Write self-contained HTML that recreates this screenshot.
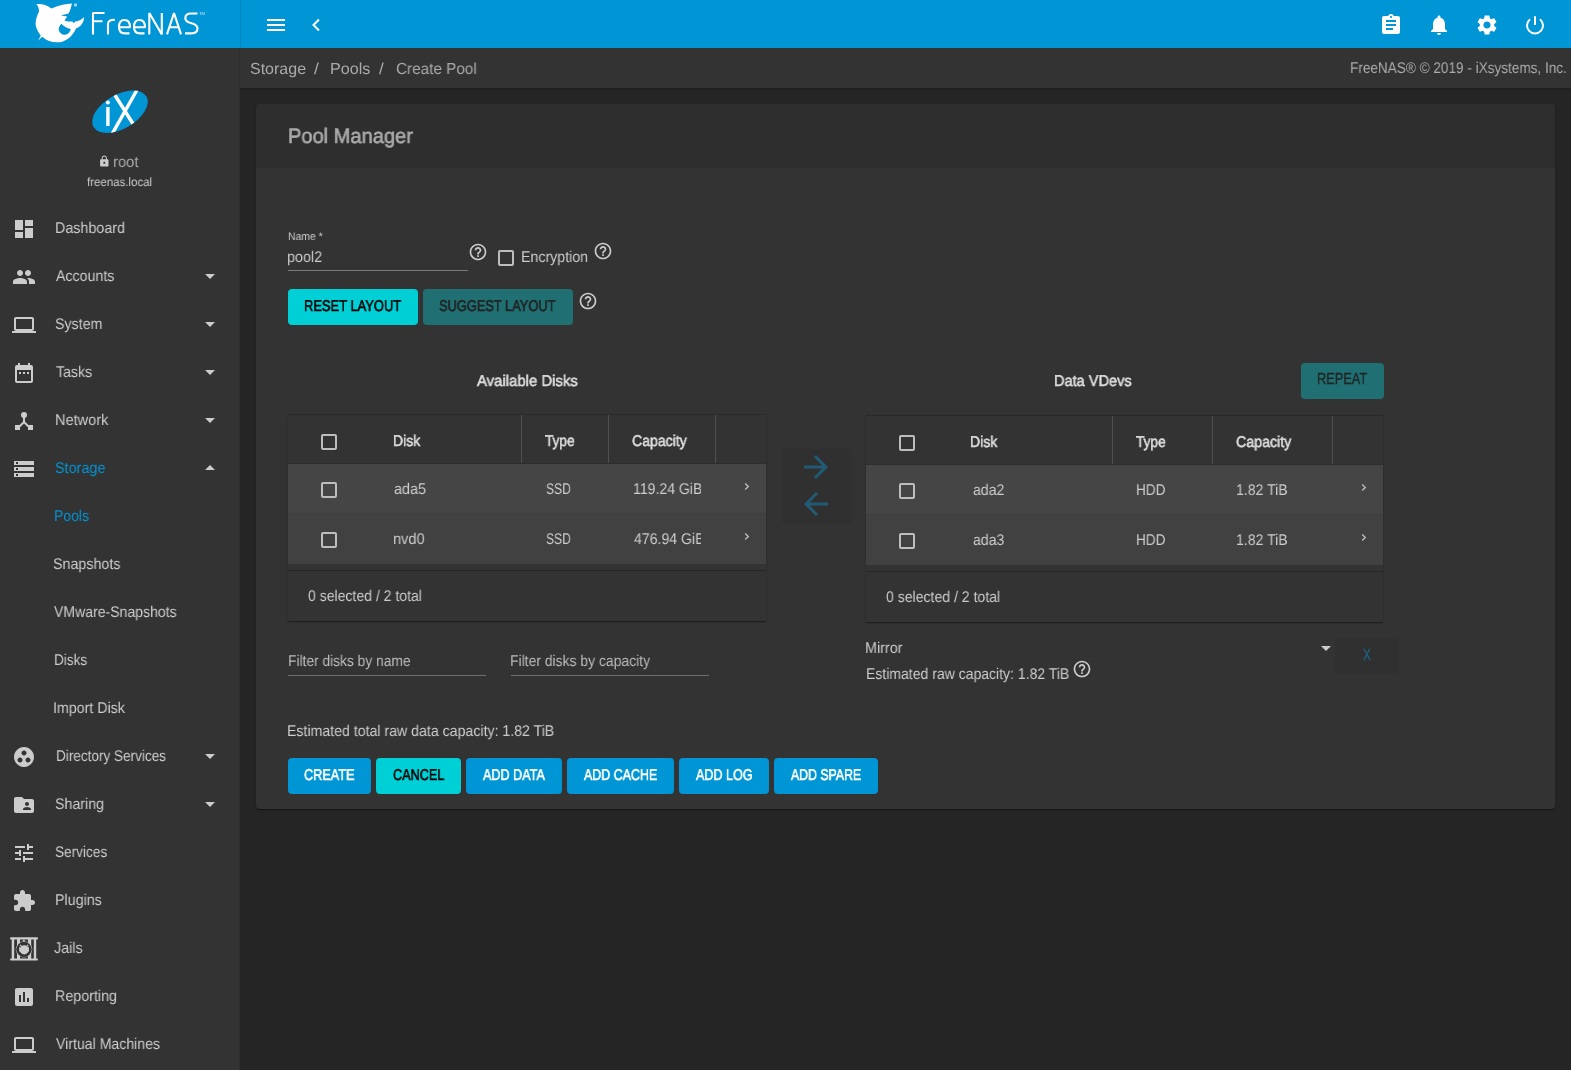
<!DOCTYPE html>
<html><head><meta charset="utf-8">
<style>
*{box-sizing:border-box;margin:0;padding:0}
html,body{width:1571px;height:1070px;overflow:hidden;background:#252525;font-family:"Liberation Sans",sans-serif;color:#ccc}
.abs{position:absolute}
#topbar{position:absolute;left:0;top:0;width:1571px;height:48px;background:#0095d5}
#topdiv{position:absolute;left:240px;top:0;width:1px;height:48px;background:#0887bf}
#sidebar{position:absolute;left:0;top:48px;width:240px;height:1022px;background:#333}
#sidebar .sep{position:absolute;left:239px;top:0;width:1px;height:1022px;background:#2c2c2c}
#crumb{position:absolute;left:240px;top:48px;width:1331px;height:40px;background:#333}
.t{position:absolute;white-space:nowrap;line-height:1;will-change:transform}
.nav{position:absolute;left:0;width:240px;height:48px}
.nav svg{position:absolute;left:12px;top:13px;width:24px;height:24px;fill:#ccc}
.nav .lbl{position:absolute;left:56px;top:17px;font-size:14px;color:#ccc;line-height:14px;white-space:nowrap;will-change:transform}
.nav .car{position:absolute;left:205px;top:22px;width:0;height:0;border-left:5px solid transparent;border-right:5px solid transparent;border-top:5px solid #ccc}
.nav .car.up{border-top:0;border-bottom:5px solid #ccc;top:21px}
.sub .lbl{left:54px}
#card{position:absolute;left:256px;top:104px;width:1299px;height:705px;background:#333;border-radius:4px;box-shadow:0 2px 1px -1px rgba(0,0,0,.2),0 1px 1px 0 rgba(0,0,0,.14),0 1px 3px 0 rgba(0,0,0,.12)}
#cardhead{position:absolute;left:0;top:0;width:1299px;height:64px;background:#2e2e2e;border-radius:4px 4px 0 0}
.btn{position:absolute;border-radius:4px;height:36px}
.help{position:absolute;width:20px;height:20px;fill:#ccc}
.cb{position:absolute;width:16px;height:16px;border:2px solid #bdbdbd;border-radius:2px}






.th{position:absolute;font-size:14px;font-weight:bold;color:#ddd;line-height:14px;white-space:nowrap}
.td{position:absolute;font-size:14px;color:#ccc;line-height:14px;white-space:nowrap}
.chev{position:absolute;font-size:12px;color:#ccc}

.tbl{position:absolute;background:#333;box-shadow:0 2px 1px -1px rgba(0,0,0,.2),0 1px 1px 0 rgba(0,0,0,.14),0 1px 3px 0 rgba(0,0,0,.12)}
.tbl .hd{position:absolute;left:0;top:0;width:100%;height:48px;background:#333}
.tbl .hb{position:absolute;left:0;top:48px;width:100%;height:1px;background:#2e2e2e}
.tbl .r1{position:absolute;left:0;top:49px;width:100%;height:50px;background:#454545;border-bottom:1px solid #3f3f3f}
.tbl .r2{position:absolute;left:0;top:99px;width:100%;height:50px;background:#414141}
.tbl .strip{position:absolute;left:0;top:149px;width:100%;height:7px;background:#333;border-bottom:1px solid #262626}
.tbl .vs{position:absolute;top:0;width:1px;height:48px;background:#505050}
</style></head><body>

<div id="topbar"></div>
<div id="topdiv"></div>
<div id="sidebar"><div class="sep"></div></div>
<div class="nav" style="top:204px"><svg viewBox="0 0 24 24"><path d="M3 13h8V3H3v10zm0 8h8v-6H3v6zm10 0h8V11h-8v10zm0-18v6h8V3h-8z"/></svg></div>
<div class="nav" style="top:252px"><svg viewBox="0 0 24 24"><path d="M16 11c1.66 0 2.99-1.34 2.99-3S17.66 5 16 5c-1.66 0-3 1.34-3 3s1.34 3 3 3zm-8 0c1.66 0 2.99-1.34 2.99-3S9.66 5 8 5C6.34 5 5 6.34 5 8s1.34 3 3 3zm0 2c-2.33 0-7 1.17-7 3.5V19h14v-2.5c0-2.33-4.67-3.5-7-3.5zm8 0c-.29 0-.62.02-.97.05 1.16.84 1.97 1.97 1.97 3.45V19h6v-2.5c0-2.33-4.67-3.5-7-3.5z"/></svg><div class="car"></div></div>
<div class="nav" style="top:300px"><svg viewBox="0 0 24 24"><path d="M20 18c1.1 0 1.99-.9 1.99-2L22 6c0-1.1-.9-2-2-2H4c-1.1 0-2 .9-2 2v10c0 1.1.9 2 2 2H0v2h24v-2h-4zM4 6h16v10H4V6z"/></svg><div class="car"></div></div>
<div class="nav" style="top:348px"><svg viewBox="0 0 24 24"><path d="M9 11H7v2h2v-2zm4 0h-2v2h2v-2zm4 0h-2v2h2v-2zm2-7h-1V2h-2v2H8V2H6v2H5c-1.11 0-1.99.9-1.99 2L3 20c0 1.1.89 2 2 2h14c1.1 0 2-.9 2-2V6c0-1.1-.9-2-2-2zm0 16H5V9h14v11z"/></svg><div class="car"></div></div>
<div class="nav" style="top:396px"><svg viewBox="0 0 24 24"><circle cx="12" cy="6" r="3"/><path d="M11 8h2v4.6l4.3 4.3-1.4 1.4L12 14.4l-3.9 3.9-1.4-1.4 4.3-4.3z"/><rect x="3" y="16" width="5" height="5"/><rect x="16" y="16" width="5" height="5"/></svg><div class="car"></div></div>
<div class="nav" style="top:444px"><svg viewBox="0 0 24 24"><path d="M2 20h20v-4H2v4zm2-3h2v2H4v-2zM2 4v4h20V4H2zm4 3H4V5h2v2zm-4 7h20v-4H2v4zm2-3h2v2H4v-2z"/></svg><div class="car up"></div></div>
<div class="nav sub" style="top:492px"></div>
<div class="nav sub" style="top:540px"></div>
<div class="nav sub" style="top:588px"></div>
<div class="nav sub" style="top:636px"></div>
<div class="nav sub" style="top:684px"></div>
<div class="nav" style="top:732px"><svg viewBox="0 0 24 24"><path d="M12 2C6.48 2 2 6.48 2 12s4.48 10 10 10 10-4.48 10-10S17.52 2 12 2zM8 17.5c-1.38 0-2.5-1.12-2.5-2.5s1.12-2.5 2.5-2.5 2.5 1.12 2.5 2.5-1.12 2.5-2.5 2.5zM9.5 8c0-1.38 1.12-2.5 2.5-2.5s2.5 1.12 2.5 2.5-1.12 2.5-2.5 2.5S9.5 9.38 9.5 8zm6.5 9.5c-1.38 0-2.5-1.12-2.5-2.5s1.12-2.5 2.5-2.5 2.5 1.12 2.5 2.5-1.12 2.5-2.5 2.5z"/></svg><div class="car"></div></div>
<div class="nav" style="top:780px"><svg viewBox="0 0 24 24"><path d="M20 6h-8l-2-2H4c-1.1 0-1.99.9-1.99 2L2 18c0 1.1.9 2 2 2h16c1.1 0 2-.9 2-2V8c0-1.1-.9-2-2-2zm-5 3c1.1 0 2 .9 2 2s-.9 2-2 2-2-.9-2-2 .9-2 2-2zm4 8h-8v-1c0-1.33 2.67-2 4-2s4 .67 4 2v1z"/></svg><div class="car"></div></div>
<div class="nav" style="top:828px"><svg viewBox="0 0 24 24"><path d="M3 17v2h6v-2H3zM3 5v2h10V5H3zm10 16v-2h8v-2h-8v-2h-2v6h2zM7 9v2H3v2h4v2h2V9H7zm14 4v-2H11v2h10zm-6-4h2V7h4V5h-4V3h-2v6z"/></svg></div>
<div class="nav" style="top:876px"><svg viewBox="0 0 24 24"><path d="M20.5 11H19V7c0-1.1-.9-2-2-2h-4V3.5C13 2.12 11.88 1 10.5 1S8 2.12 8 3.5V5H4c-1.1 0-1.99.9-1.99 2v3.8H3.5c1.49 0 2.7 1.21 2.7 2.7s-1.21 2.7-2.7 2.7H2V20c0 1.1.9 2 2 2h3.8v-1.5c0-1.49 1.21-2.7 2.7-2.7 1.49 0 2.7 1.21 2.7 2.7V22H17c1.1 0 2-.9 2-2v-4h1.5c1.38 0 2.5-1.12 2.5-2.5S21.88 11 20.5 11z"/></svg></div>
<div class="nav" style="top:924px"><svg viewBox="0 0 28 26" style="left:10px;top:12px;width:28px;height:26px"><rect x="0" y="1.3" width="28" height="2.1" rx="1"/><rect x="0" y="22.4" width="28" height="2.2" rx="1"/><rect x="1.7" y="3" width="2.5" height="20"/><rect x="7" y="3" width="3" height="20"/><rect x="18" y="3" width="3.2" height="20"/><rect x="23.8" y="3" width="2.4" height="20"/><circle cx="14" cy="13.3" r="7.8" fill="none" stroke="#ccc" stroke-width="0.7"/><circle cx="14" cy="13.3" r="6.3" fill="none" stroke="#333" stroke-width="2.6"/><circle cx="14.2" cy="13.8" r="4.6"/><path d="M9.6 10.6 L10.2 8.4 L12 9.6Z M18.6 10.6 L18 8.4 L16.2 9.6Z"/><circle cx="13.9" cy="4.6" r="1"/></svg></div>
<div class="nav" style="top:972px"><svg viewBox="0 0 24 24"><path d="M19 3H5c-1.1 0-2 .9-2 2v14c0 1.1.9 2 2 2h14c1.1 0 2-.9 2-2V5c0-1.1-.9-2-2-2zM9 17H7v-7h2v7zm4 0h-2V7h2v10zm4 0h-2v-4h2v4z"/></svg></div>
<div class="nav" style="top:1020px"><svg viewBox="0 0 24 24"><path d="M20 18c1.1 0 1.99-.9 1.99-2L22 6c0-1.1-.9-2-2-2H4c-1.1 0-2 .9-2 2v10c0 1.1.9 2 2 2H0v2h24v-2h-4zM4 6h16v10H4V6z"/></svg></div>
<div id="crumb"></div>
<div class="abs" style="left:240px;top:88px;width:1331px;height:1px;background:#1f1f1f"></div><div class="abs" style="left:240px;top:89px;width:1331px;height:1px;background:#232323"></div>

<!-- logo -->
<svg class="abs" style="left:30px;top:0" width="60" height="48" viewBox="0 0 60 48">
<path fill="#fff" d="M6.3 4 C12 3.6 17 5 21.5 8.5 C28 5.5 35 3.8 41.9 3.4 C41 8 40 11 38.6 13.5 L30.9 15.5 L37.2 16.6 C36 18.5 35.2 19.5 34.5 20.6 C37 21.8 40 21.7 42.6 21.5 L43.5 23.3 L45.3 21.5 C49 21 52 19.5 53.8 17 C54.5 22 50.5 27 46.2 28.3 C44 33 40 39 33 41.5 C26 43.5 18 42 12.1 36.8 L8.1 40.8 L10.8 35.4 C6.5 30 5 25 5.8 21.5 C6.2 17 8 14 9 11.2 C9 8 8 6 6.3 4 Z M31.4 23.8 C29.5 26 28.5 28 28.7 29.6 C29.5 33.5 32 34.8 35 34.8 C38.5 34.5 40.3 31.5 40.8 29.1 C37 28.3 33.5 26.5 31.4 23.8 Z"/>
<circle cx="45.5" cy="4.9" r="1.7" fill="#9fd6f0"/>
</svg>
<svg class="abs" style="left:88px;top:8px" width="122" height="30" viewBox="88 8 122 30" fill="none" stroke="#fff" stroke-width="2.1" stroke-miterlimit="1">
<path d="M93 34.4V13H104.5 M93 21.3H102.5"/>
<path d="M108 34.4V24 C108 21 110 19.8 114.8 19.8"/>
<path d="M119 27.3H130 C130 22.5 128 20 124.5 20 C120.5 20 119 23 119 27 C119 31.5 121 33.4 125 33.4 H129.5"/>
<path d="M134 27.3H145 C145 22.5 143 20 139.5 20 C135.5 20 134 23 134 27 C134 31.5 136 33.4 140 33.4 H144.5"/>
<path d="M149.3 34.4V13 L161.8 34.4 V13"/>
<path d="M167 34.4 L174 13 L181 34.4 M169.5 27.3H178.5"/>
<path d="M197.5 13.5 H191 C187 13.5 185.3 15.5 185.3 18.3 C185.3 21.5 188 22.5 191.5 23.3 C195.5 24.3 197.5 25.5 197.5 28.6 C197.5 31.8 195.5 33.4 191.5 33.4 H185"/>
</svg>
<div class="t" style="left:199px;top:12px;font-size:4px;color:#cfe9f6">TM</div>
<!-- topbar icons -->
<svg class="abs" style="left:267px;top:19px" width="18" height="12"><rect x="0" y="0" width="18" height="2" fill="#fff"/><rect x="0" y="5" width="18" height="2" fill="#fff"/><rect x="0" y="10" width="18" height="2" fill="#fff"/></svg>
<svg class="abs" style="left:310px;top:17px" width="12" height="16"><path d="M9 2.5 L3.5 8 L9 13.5" fill="none" stroke="#fff" stroke-width="2"/></svg>
<svg class="abs" style="left:1379px;top:13px" width="24" height="24" viewBox="0 0 24 24" fill="#fff"><path d="M19 3h-4.18C14.4 1.84 13.3 1 12 1c-1.3 0-2.4.84-2.82 2H5c-1.1 0-2 .9-2 2v14c0 1.1.9 2 2 2h14c1.1 0 2-.9 2-2V5c0-1.1-.9-2-2-2zm-7 0c.55 0 1 .45 1 1s-.45 1-1 1-1-.45-1-1 .45-1 1-1zm2 14H7v-2h7v2zm3-4H7v-2h10v2zm0-4H7V7h10v2z"/></svg>
<svg class="abs" style="left:1427px;top:13px" width="24" height="24" viewBox="0 0 24 24" fill="#fff"><path d="M12 22c1.1 0 2-.9 2-2h-4c0 1.1.89 2 2 2zm6-6v-5c0-3.07-1.64-5.64-4.5-6.32V4c0-.83-.67-1.5-1.5-1.5s-1.5.67-1.5 1.5v.68C7.63 5.36 6 7.92 6 11v5l-2 2v1h16v-1l-2-2z"/></svg>
<svg class="abs" style="left:1475px;top:13px" width="24" height="24" viewBox="0 0 24 24" fill="#fff"><path d="M19.14 12.94c.04-.3.06-.61.06-.94 0-.32-.02-.64-.07-.94l2.03-1.58c.18-.14.23-.41.12-.61l-1.920-3.32c-.12-.22-.37-.29-.59-.22l-2.39.96c-.5-.38-1.03-.7-1.62-.94l-.36-2.540c-.04-.24-.24-.41-.48-.41h-3.84c-.24 0-.43.17-.47.41l-.36 2.54c-.59.24-1.13.57-1.62.94l-2.39-.96c-.22-.08-.47 0-.59.22L2.74 8.87c-.12.21-.08.47.12.61l2.03 1.58c-.05.3-.09.63-.09.94s.02.64.07.94l-2.03 1.58c-.18.14-.23.41-.12.61l1.92 3.32c.12.22.37.29.59.22l2.39-.96c.5.38 1.03.7 1.62.94l.36 2.54c.05.24.24.41.48.41h3.84c.24 0 .44-.17.47-.41l.36-2.54c.59-.24 1.13-.56 1.62-.94l2.39.96c.22.08.47 0 .59-.22l1.92-3.32c.12-.22.07-.47-.12-.61l-2.01-1.58zM12 15.6c-1.98 0-3.6-1.620-3.6-3.6s1.62-3.6 3.6-3.6 3.6 1.62 3.6 3.6-1.62 3.6-3.6 3.6z"/></svg>
<svg class="abs" style="left:1523px;top:13px" width="24" height="24" viewBox="0 0 24 24" fill="none" stroke="#fff" stroke-width="2"><path d="M12 3.2V12"/><path d="M16.9 6.2 A8 8 0 1 1 7.1 6.2"/></svg>
<!-- user -->
<svg class="abs" style="left:88px;top:88px" width="64" height="48" viewBox="88 88 64 48">
<defs><clipPath id="ell"><ellipse cx="120" cy="111.7" rx="30.5" ry="17" transform="rotate(-30 120 111.7)"/></clipPath></defs>
<ellipse cx="120" cy="111.7" rx="30.5" ry="17" transform="rotate(-30 120 111.7)" fill="#0095d5"/>
<g clip-path="url(#ell)" stroke="#fff" stroke-width="3.4" fill="none"><path d="M113 92 L135 127"/><path d="M137 90 L111.5 135"/></g>
<rect x="106.2" y="107" width="3.4" height="19" fill="#fff"/><circle cx="107.9" cy="102.4" r="2" fill="#fff"/>
</svg>
<svg class="abs" style="left:98.1px;top:154.7px" width="12.6" height="12.6" viewBox="0 0 24 24" fill="#ccc"><path d="M18 8h-1V6c0-2.76-2.24-5-5-5S7 3.24 7 6v2H6c-1.1 0-2 .9-2 2v10c0 1.1.9 2 2 2h12c1.1 0 2-.9 2-2V10c0-1.1-.9-2-2-2zm-6 9c-1.1 0-2-.9-2-2s.9-2 2-2 2 .9 2 2-.9 2-2 2zm3.1-9H8.9V6c0-1.71 1.39-3.1 3.1-3.1 1.71 0 3.1 1.39 3.1 3.1v2z"/></svg>
<!-- breadcrumb -->



<div id="card"><div id="cardhead"></div></div>
<div class="abs" style="left:288px;top:270px;width:180px;height:1px;background:#7a7a7a"></div>
<svg class="help" style="left:468px;top:242px" viewBox="0 0 24 24"><path d="M11 18h2v-2h-2v2zm1-16C6.48 2 2 6.48 2 12s4.48 10 10 10 10-4.48 10-10S17.52 2 12 2zm0 18c-4.41 0-8-3.59-8-8s3.59-8 8-8 8 3.59 8 8-3.590 8-8 8zm0-14c-2.21 0-4 1.79-4 4h2c0-1.1.9-2 2-2s2 .9 2 2c0 2-3 1.75-3 5h2c0-2.25 3-2.5 3-5 0-2.21-1.79-4-4-4z"/></svg><svg class="help" style="left:593px;top:241px" viewBox="0 0 24 24"><path d="M11 18h2v-2h-2v2zm1-16C6.48 2 2 6.48 2 12s4.48 10 10 10 10-4.48 10-10S17.52 2 12 2zm0 18c-4.41 0-8-3.59-8-8s3.59-8 8-8 8 3.59 8 8-3.590 8-8 8zm0-14c-2.21 0-4 1.79-4 4h2c0-1.1.9-2 2-2s2 .9 2 2c0 2-3 1.75-3 5h2c0-2.25 3-2.5 3-5 0-2.21-1.79-4-4-4z"/></svg><svg class="help" style="left:578px;top:291px" viewBox="0 0 24 24"><path d="M11 18h2v-2h-2v2zm1-16C6.48 2 2 6.48 2 12s4.48 10 10 10 10-4.48 10-10S17.52 2 12 2zm0 18c-4.41 0-8-3.59-8-8s3.59-8 8-8 8 3.59 8 8-3.590 8-8 8zm0-14c-2.21 0-4 1.79-4 4h2c0-1.1.9-2 2-2s2 .9 2 2c0 2-3 1.75-3 5h2c0-2.25 3-2.5 3-5 0-2.21-1.79-4-4-4z"/></svg><svg class="help" style="left:1072px;top:659px" viewBox="0 0 24 24"><path d="M11 18h2v-2h-2v2zm1-16C6.48 2 2 6.48 2 12s4.48 10 10 10 10-4.48 10-10S17.52 2 12 2zm0 18c-4.41 0-8-3.59-8-8s3.59-8 8-8 8 3.59 8 8-3.590 8-8 8zm0-14c-2.21 0-4 1.79-4 4h2c0-1.1.9-2 2-2s2 .9 2 2c0 2-3 1.75-3 5h2c0-2.25 3-2.5 3-5 0-2.21-1.79-4-4-4z"/></svg><div class="cb" style="left:498px;top:250px"></div>
<div class="btn" style="left:288px;top:289px;width:130px;background:#00d0d6"></div>
<div class="btn" style="left:423px;top:289px;width:150px;background:#1f6f73"></div>
<div class="btn" style="left:1301px;top:363px;width:83px;height:36px;background:#1f6f73"></div>
<div class="tbl" style="left:288px;top:415px;width:478px;height:206px"><div class="hd"></div><div class="hb"></div><div class="r1"></div><div class="r2"></div><div class="strip"></div><div class="abs" style="left:0;top:-1px;width:100%;height:1px;background:rgba(0,0,0,.18)"></div><div class="vs" style="left:233px"></div><div class="vs" style="left:320px"></div><div class="vs" style="left:427px"></div></div><div class="cb" style="left:321px;top:434px"></div><div class="cb" style="left:321px;top:482px"></div><div class="cb" style="left:321px;top:532px"></div><svg class="abs" style="left:744px;top:483px" width="6" height="8" viewBox="0 0 6 8"><path d="M1.2 0.6L4.3 3.6L1.2 6.6" fill="none" stroke="#bbb" stroke-width="1.4"/></svg><svg class="abs" style="left:744px;top:533px" width="6" height="8" viewBox="0 0 6 8"><path d="M1.2 0.6L4.3 3.6L1.2 6.6" fill="none" stroke="#bbb" stroke-width="1.4"/></svg><div class="tbl" style="left:866px;top:416px;width:517px;height:206px"><div class="hd"></div><div class="hb"></div><div class="r1"></div><div class="r2"></div><div class="strip"></div><div class="abs" style="left:0;top:-1px;width:100%;height:1px;background:rgba(0,0,0,.18)"></div><div class="vs" style="left:246px"></div><div class="vs" style="left:346px"></div><div class="vs" style="left:466px"></div></div><div class="cb" style="left:899px;top:435px"></div><div class="cb" style="left:899px;top:483px"></div><div class="cb" style="left:899px;top:533px"></div><svg class="abs" style="left:1361px;top:484px" width="6" height="8" viewBox="0 0 6 8"><path d="M1.2 0.6L4.3 3.6L1.2 6.6" fill="none" stroke="#bbb" stroke-width="1.4"/></svg><svg class="abs" style="left:1361px;top:534px" width="6" height="8" viewBox="0 0 6 8"><path d="M1.2 0.6L4.3 3.6L1.2 6.6" fill="none" stroke="#bbb" stroke-width="1.4"/></svg>
<div class="abs" style="left:783px;top:449px;width:67px;height:72px;background:#303030;box-shadow:0 1px 2px rgba(0,0,0,.15)"></div>
<svg class="abs" style="left:798px;top:449px" width="36" height="36" viewBox="0 0 24 24" fill="#215a74"><path d="M12 4l-1.41 1.41L16.17 11H4v2h12.17l-5.58 5.59L12 20l8-8z"/></svg>
<svg class="abs" style="left:798px;top:486px" width="36" height="36" viewBox="0 0 24 24" fill="#215a74"><path d="M20 11H7.83l5.59-5.59L12 4l-8 8 8 8 1.41-1.41L7.83 13H20v-2z"/></svg>
<div class="abs" style="left:1321px;top:646px;width:0;height:0;border-left:5px solid transparent;border-right:5px solid transparent;border-top:5px solid #ccc"></div>
<div class="abs" style="left:1335px;top:638px;width:64px;height:36px;background:#303030;border-radius:4px"></div>
<div class="abs" style="left:288px;top:675px;width:198px;height:1px;background:#6f6f6f"></div>
<div class="abs" style="left:511px;top:675px;width:198px;height:1px;background:#6f6f6f"></div>
<div class="btn" style="left:288px;top:758px;width:83px;height:36px;background:#0095d5"></div>
<div class="btn" style="left:376px;top:758px;width:85px;height:36px;background:#00d0d6"></div>
<div class="btn" style="left:466px;top:758px;width:96px;height:36px;background:#0095d5"></div>
<div class="btn" style="left:567px;top:758px;width:107px;height:36px;background:#0095d5"></div>
<div class="btn" style="left:679px;top:758px;width:90px;height:36px;background:#0095d5"></div>
<div class="btn" style="left:774px;top:758px;width:104px;height:36px;background:#0095d5"></div>

<div class="t" style="left:55.28px;top:221px;font-size:15.5px;color:#ccc;text-rendering:geometricPrecision;transform:scaleX(0.9230);transform-origin:0 0">Dashboard</div>
<div class="t" style="left:56.20px;top:269px;font-size:15.5px;color:#ccc;text-rendering:geometricPrecision;transform:scaleX(0.9156);transform-origin:0 0">Accounts</div>
<div class="t" style="left:55.28px;top:317px;font-size:15.5px;color:#ccc;text-rendering:geometricPrecision;transform:scaleX(0.9160);transform-origin:0 0">System</div>
<div class="t" style="left:56.20px;top:365px;font-size:15.5px;color:#ccc;text-rendering:geometricPrecision;transform:scaleX(0.9154);transform-origin:0 0">Tasks</div>
<div class="t" style="left:55.26px;top:413px;font-size:15.5px;color:#ccc;text-rendering:geometricPrecision;transform:scaleX(0.9393);transform-origin:0 0">Network</div>
<div class="t" style="left:55.27px;top:461px;font-size:15.5px;color:#0095d5;text-rendering:geometricPrecision;transform:scaleX(0.9283);transform-origin:0 0">Storage</div>
<div class="t" style="left:53.59px;top:509px;font-size:15.5px;color:#0095d5;text-rendering:geometricPrecision;transform:scaleX(0.9053);transform-origin:0 0">Pools</div>
<div class="t" style="left:53.48px;top:557px;font-size:15.5px;color:#ccc;text-rendering:geometricPrecision;transform:scaleX(0.9208);transform-origin:0 0">Snapshots</div>
<div class="t" style="left:54.40px;top:605px;font-size:15.5px;color:#ccc;text-rendering:geometricPrecision;transform:scaleX(0.9067);transform-origin:0 0">VMware-Snapshots</div>
<div class="t" style="left:53.53px;top:653px;font-size:15.5px;color:#ccc;text-rendering:geometricPrecision;transform:scaleX(0.8730);transform-origin:0 0">Disks</div>
<div class="t" style="left:53.48px;top:701px;font-size:15.5px;color:#ccc;text-rendering:geometricPrecision;transform:scaleX(0.9182);transform-origin:0 0">Import Disk</div>
<div class="t" style="left:55.53px;top:749px;font-size:15.5px;color:#ccc;text-rendering:geometricPrecision;transform:scaleX(0.8744);transform-origin:0 0">Directory Services</div>
<div class="t" style="left:55.18px;top:797px;font-size:15.5px;color:#ccc;text-rendering:geometricPrecision;transform:scaleX(0.9173);transform-origin:0 0">Sharing</div>
<div class="t" style="left:55.22px;top:845px;font-size:15.5px;color:#ccc;text-rendering:geometricPrecision;transform:scaleX(0.8776);transform-origin:0 0">Services</div>
<div class="t" style="left:55.18px;top:893px;font-size:15.5px;color:#ccc;text-rendering:geometricPrecision;transform:scaleX(0.9220);transform-origin:0 0">Plugins</div>
<div class="t" style="left:54.20px;top:941px;font-size:15.5px;color:#ccc;text-rendering:geometricPrecision;transform:scaleX(0.9258);transform-origin:0 0">Jails</div>
<div class="t" style="left:55.18px;top:989px;font-size:15.5px;color:#ccc;text-rendering:geometricPrecision;transform:scaleX(0.9227);transform-origin:0 0">Reporting</div>
<div class="t" style="left:56.10px;top:1037px;font-size:15.5px;color:#ccc;text-rendering:geometricPrecision;transform:scaleX(0.9105);transform-origin:0 0">Virtual Machines</div>
<div class="t" style="left:113.25px;top:155px;font-size:15.5px;color:#aaa;text-rendering:geometricPrecision;transform:scaleX(0.9500);transform-origin:0 0">root</div>
<div class="t" style="left:87.30px;top:176px;font-size:12px;color:#ccc;text-rendering:geometricPrecision;transform:scaleX(0.9574);transform-origin:0 0">freenas.local</div>
<div class="t" style="left:250.10px;top:62px;font-size:16px;color:#aaa;text-rendering:geometricPrecision">Storage</div>
<div class="t" style="left:313.70px;top:62px;font-size:16px;color:#aaa;text-rendering:geometricPrecision;transform:scaleX(1.0800);transform-origin:0 0">/</div>
<div class="t" style="left:330.29px;top:62px;font-size:16px;color:#aaa;text-rendering:geometricPrecision;transform:scaleX(1.0077);transform-origin:0 0">Pools</div>
<div class="t" style="left:378.70px;top:62px;font-size:16px;color:#aaa;text-rendering:geometricPrecision;transform:scaleX(1.0600);transform-origin:0 0">/</div>
<div class="t" style="left:396.20px;top:62px;font-size:16px;color:#aaa;text-rendering:geometricPrecision;transform:scaleX(0.9548);transform-origin:0 0">Create Pool</div>
<div class="t" style="left:1349.62px;top:61px;font-size:15.5px;color:#aaa;text-rendering:geometricPrecision;transform:scaleX(0.8756);transform-origin:0 0">FreeNAS&reg; &copy; 2019 - iXsystems, Inc.</div>
<div class="t" style="left:287.74px;top:126px;font-size:21px;color:#aaa;text-rendering:geometricPrecision;-webkit-text-stroke:0.6px currentColor;transform:scaleX(0.9554);transform-origin:0 0">Pool Manager</div>
<div class="t" style="left:287.56px;top:232px;font-size:11px;color:#ccc;text-rendering:geometricPrecision;transform:scaleX(0.9444);transform-origin:0 0">Name *</div>
<div class="t" style="left:287.27px;top:250px;font-size:15.5px;color:#ccc;text-rendering:geometricPrecision;transform:scaleX(0.9297);transform-origin:0 0">pool2</div>
<div class="t" style="left:521.48px;top:250px;font-size:15.5px;color:#ccc;text-rendering:geometricPrecision;transform:scaleX(0.9167);transform-origin:0 0">Encryption</div>
<div class="t" style="left:303.57px;top:299px;font-size:15.5px;color:#000;text-rendering:geometricPrecision;-webkit-text-stroke:0.6px currentColor;transform:scaleX(0.8336);transform-origin:0 0">RESET LAYOUT</div>
<div class="t" style="left:439.20px;top:299px;font-size:15.5px;color:#222;text-rendering:geometricPrecision;-webkit-text-stroke:0.6px currentColor;transform:scaleX(0.8277);transform-origin:0 0">SUGGEST LAYOUT</div>
<div class="t" style="left:477.16px;top:374px;font-size:15.5px;color:#ddd;text-rendering:geometricPrecision;-webkit-text-stroke:0.6px currentColor;transform:scaleX(0.9623);transform-origin:0 0">Available Disks</div>
<div class="t" style="left:1053.56px;top:374px;font-size:15.5px;color:#ddd;text-rendering:geometricPrecision;-webkit-text-stroke:0.6px currentColor;transform:scaleX(0.9390);transform-origin:0 0">Data VDevs</div>
<div class="t" style="left:1316.60px;top:372px;font-size:16px;color:#222;text-rendering:geometricPrecision;-webkit-text-stroke:0.25px currentColor;transform:scaleX(0.7984);transform-origin:0 0">REPEAT</div>
<div class="t" style="left:392.50px;top:434px;font-size:15.5px;color:#ddd;text-rendering:geometricPrecision;-webkit-text-stroke:0.6px currentColor;transform:scaleX(0.9000);transform-origin:0 0">Disk</div>
<div class="t" style="left:545.30px;top:434px;font-size:15.5px;color:#ddd;text-rendering:geometricPrecision;-webkit-text-stroke:0.6px currentColor;transform:scaleX(0.8824);transform-origin:0 0">Type</div>
<div class="t" style="left:632.40px;top:434px;font-size:15.5px;color:#ddd;text-rendering:geometricPrecision;-webkit-text-stroke:0.6px currentColor;transform:scaleX(0.9082);transform-origin:0 0">Capacity</div>
<div class="t" style="left:970.40px;top:435px;font-size:15.5px;color:#ddd;text-rendering:geometricPrecision;-webkit-text-stroke:0.6px currentColor;transform:scaleX(0.9033);transform-origin:0 0">Disk</div>
<div class="t" style="left:1136.30px;top:435px;font-size:15.5px;color:#ddd;text-rendering:geometricPrecision;-webkit-text-stroke:0.6px currentColor;transform:scaleX(0.8853);transform-origin:0 0">Type</div>
<div class="t" style="left:1236.00px;top:435px;font-size:15.5px;color:#ddd;text-rendering:geometricPrecision;-webkit-text-stroke:0.6px currentColor;transform:scaleX(0.9180);transform-origin:0 0">Capacity</div>
<div class="t" style="left:394.00px;top:482px;font-size:15.5px;color:#ccc;text-rendering:geometricPrecision;transform:scaleX(0.9324);transform-origin:0 0">ada5</div>
<div class="t" style="left:545.52px;top:482px;font-size:15.5px;color:#ccc;text-rendering:geometricPrecision;transform:scaleX(0.7806);transform-origin:0 0">SSD</div>
<div class="abs" style="left:0;top:0;width:701px;height:1070px;overflow:hidden"><div class="t" style="left:632.69px;top:482px;font-size:15.5px;color:#ccc;text-rendering:geometricPrecision;transform:scaleX(0.9091);transform-origin:0 0">119.24 GiB</div></div>
<div class="t" style="left:393.26px;top:532px;font-size:15.5px;color:#ccc;text-rendering:geometricPrecision;transform:scaleX(0.9437);transform-origin:0 0">nvd0</div>
<div class="t" style="left:545.52px;top:532px;font-size:15.5px;color:#ccc;text-rendering:geometricPrecision;transform:scaleX(0.7806);transform-origin:0 0">SSD</div>
<div class="abs" style="left:0;top:0;width:701px;height:1070px;overflow:hidden"><div class="t" style="left:633.60px;top:532px;font-size:15.5px;color:#ccc;text-rendering:geometricPrecision;transform:scaleX(0.9091);transform-origin:0 0">476.94 GiB</div></div>
<div class="t" style="left:972.60px;top:483px;font-size:15.5px;color:#ccc;text-rendering:geometricPrecision;transform:scaleX(0.9118);transform-origin:0 0">ada2</div>
<div class="t" style="left:1136.12px;top:483px;font-size:15.5px;color:#ccc;text-rendering:geometricPrecision;transform:scaleX(0.8750);transform-origin:0 0">HDD</div>
<div class="t" style="left:1236.29px;top:483px;font-size:15.5px;color:#ccc;text-rendering:geometricPrecision;transform:scaleX(0.9091);transform-origin:0 0">1.82 TiB</div>
<div class="t" style="left:972.60px;top:533px;font-size:15.5px;color:#ccc;text-rendering:geometricPrecision;transform:scaleX(0.9118);transform-origin:0 0">ada3</div>
<div class="t" style="left:1136.12px;top:533px;font-size:15.5px;color:#ccc;text-rendering:geometricPrecision;transform:scaleX(0.8750);transform-origin:0 0">HDD</div>
<div class="t" style="left:1236.29px;top:533px;font-size:15.5px;color:#ccc;text-rendering:geometricPrecision;transform:scaleX(0.9091);transform-origin:0 0">1.82 TiB</div>
<div class="t" style="left:307.50px;top:589px;font-size:15.5px;color:#ccc;text-rendering:geometricPrecision;transform:scaleX(0.9056);transform-origin:0 0">0 selected / 2 total</div>
<div class="t" style="left:885.60px;top:590px;font-size:15.5px;color:#ccc;text-rendering:geometricPrecision;transform:scaleX(0.9072);transform-origin:0 0">0 selected / 2 total</div>
<div class="t" style="left:865.47px;top:641px;font-size:15.5px;color:#ccc;text-rendering:geometricPrecision;transform:scaleX(0.9275);transform-origin:0 0">Mirror</div>
<div class="t" style="left:865.50px;top:667px;font-size:15.5px;color:#ccc;text-rendering:geometricPrecision;transform:scaleX(0.9040);transform-origin:0 0">Estimated raw capacity: 1.82 TiB</div>
<div class="t" style="left:1363.40px;top:648px;font-size:16px;color:#20648a;text-rendering:geometricPrecision;-webkit-text-stroke:0.25px currentColor;transform:scaleX(0.7273);transform-origin:0 0">X</div>
<div class="t" style="left:287.51px;top:654px;font-size:15.5px;color:#bbb;text-rendering:geometricPrecision;transform:scaleX(0.8891);transform-origin:0 0">Filter disks by name</div>
<div class="t" style="left:510.20px;top:654px;font-size:15.5px;color:#bbb;text-rendering:geometricPrecision;transform:scaleX(0.8981);transform-origin:0 0">Filter disks by capacity</div>
<div class="t" style="left:287.49px;top:724px;font-size:15.5px;color:#ccc;text-rendering:geometricPrecision;transform:scaleX(0.9124);transform-origin:0 0">Estimated total raw data capacity: 1.82 TiB</div>
<div class="t" style="left:304.10px;top:768px;font-size:15.5px;color:#fff;text-rendering:geometricPrecision;-webkit-text-stroke:0.6px currentColor;transform:scaleX(0.8161);transform-origin:0 0">CREATE</div>
<div class="t" style="left:392.50px;top:768px;font-size:15.5px;color:#000;text-rendering:geometricPrecision;-webkit-text-stroke:0.6px currentColor;transform:scaleX(0.8159);transform-origin:0 0">CANCEL</div>
<div class="t" style="left:483.01px;top:768px;font-size:15.5px;color:#fff;text-rendering:geometricPrecision;-webkit-text-stroke:0.6px currentColor;transform:scaleX(0.8128);transform-origin:0 0">ADD DATA</div>
<div class="t" style="left:583.90px;top:768px;font-size:15.5px;color:#fff;text-rendering:geometricPrecision;-webkit-text-stroke:0.6px currentColor;transform:scaleX(0.8022);transform-origin:0 0">ADD CACHE</div>
<div class="t" style="left:696.31px;top:768px;font-size:15.5px;color:#fff;text-rendering:geometricPrecision;-webkit-text-stroke:0.6px currentColor;transform:scaleX(0.8100);transform-origin:0 0">ADD LOG</div>
<div class="t" style="left:791.29px;top:768px;font-size:15.5px;color:#fff;text-rendering:geometricPrecision;-webkit-text-stroke:0.6px currentColor;transform:scaleX(0.7933);transform-origin:0 0">ADD SPARE</div>
</body></html>
